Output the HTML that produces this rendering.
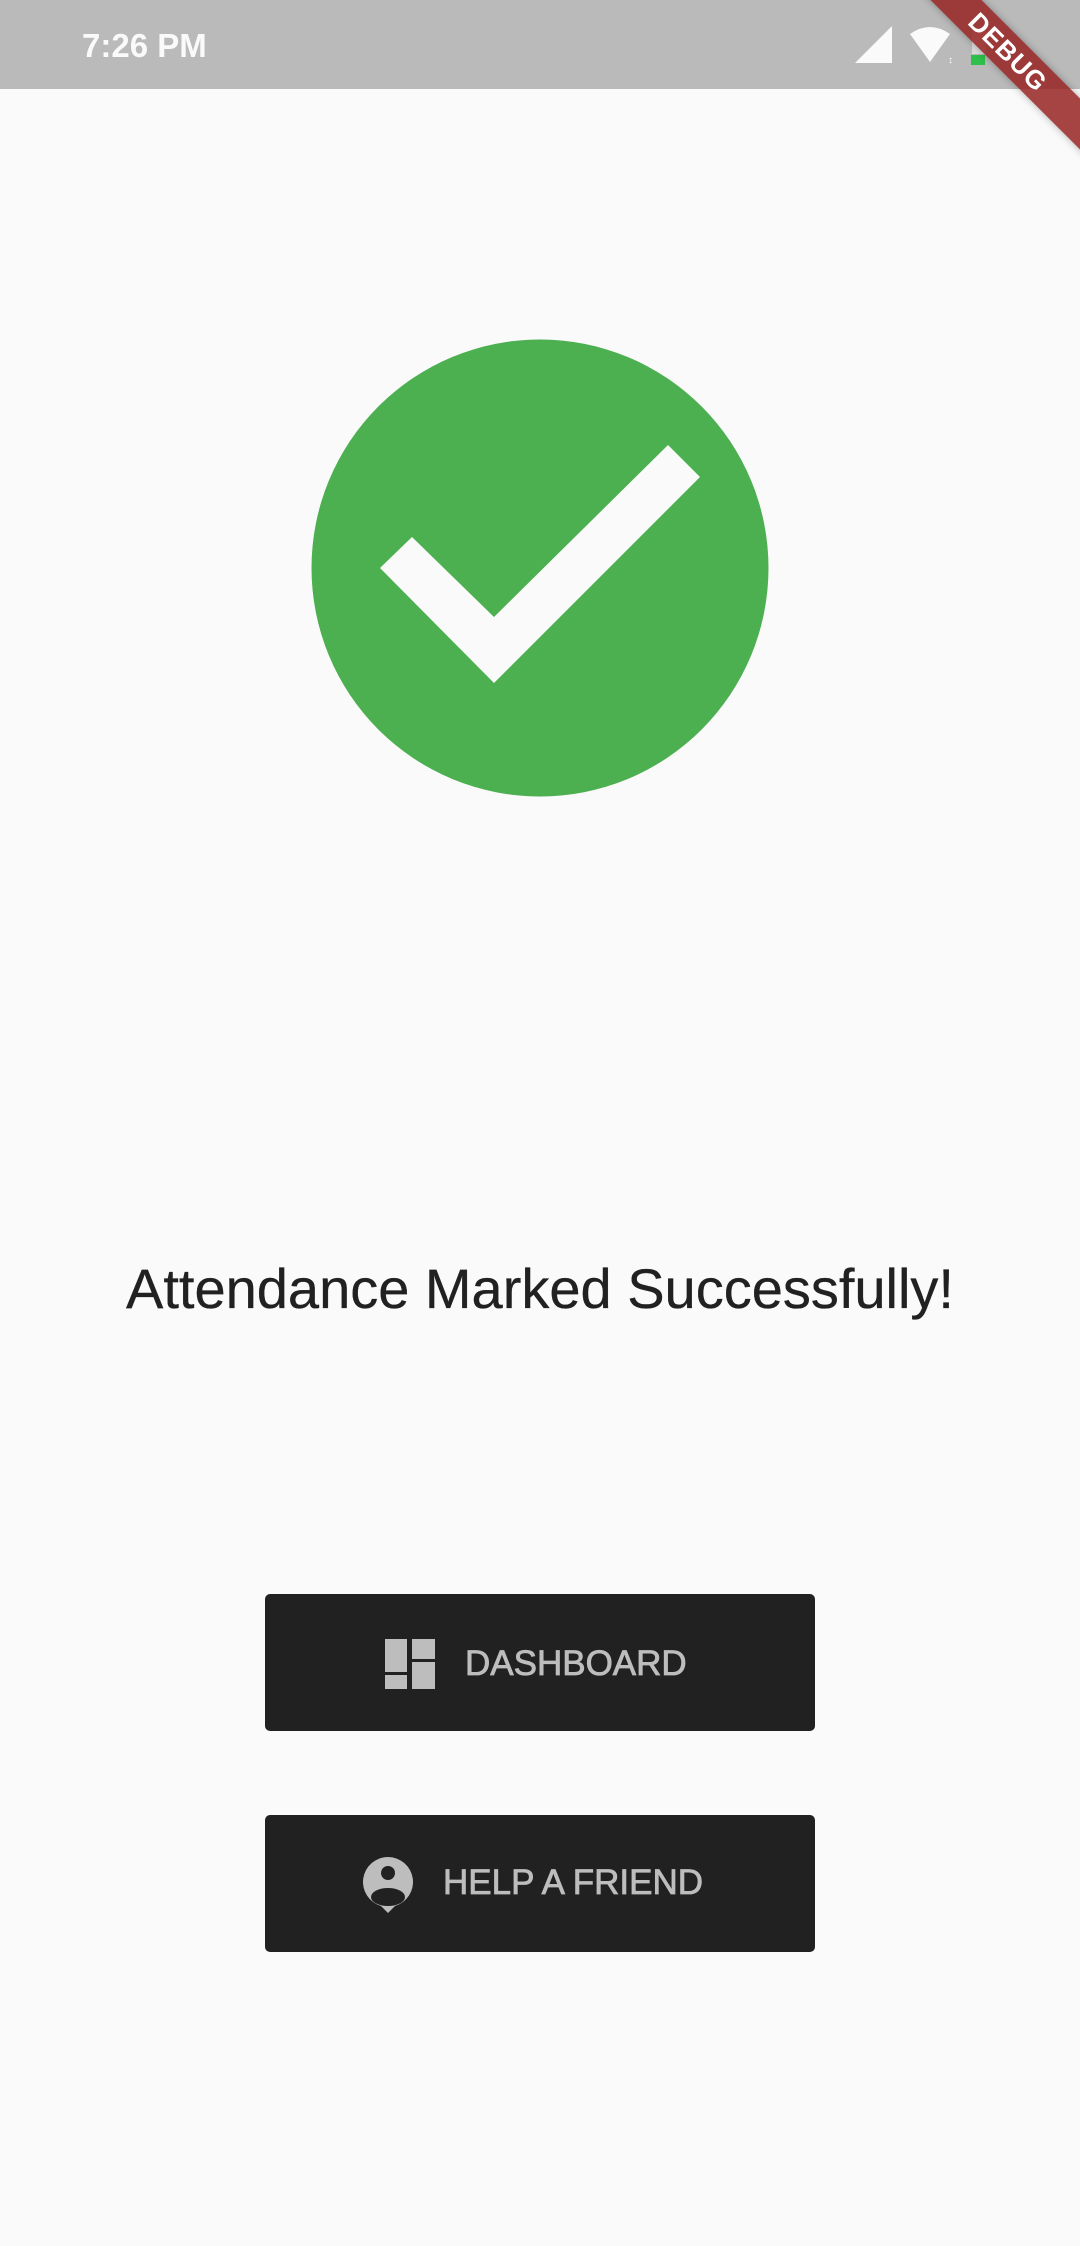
<!DOCTYPE html>
<html><head><meta charset="utf-8">
<style>
html,body{margin:0;padding:0;}
body{width:1080px;height:2246px;background:#fafafa;position:relative;overflow:hidden;font-family:"Liberation Sans",sans-serif;}
.status{position:absolute;left:0;top:0;width:1080px;height:89px;background:#bababa;}
.time{position:absolute;left:82px;top:27px;font-size:33px;font-weight:bold;color:#fafafa;}
.btn{position:absolute;left:265px;width:550px;height:137px;background:#212121;border-radius:5px;}
.lbl{position:absolute;color:#bdbdbd;font-size:35px;line-height:40px;-webkit-text-stroke:0.8px #bdbdbd;}
.title{position:absolute;left:0;width:1080px;top:1256px;text-align:center;font-size:56px;color:#212121;line-height:66px;-webkit-text-stroke:0.3px #212121;}
.banner{position:absolute;right:-78px;top:34px;width:300px;height:36px;background:rgba(150,35,35,0.85);transform:rotate(45deg);color:#fff;font-weight:bold;font-size:26px;text-align:center;line-height:36px;box-shadow:0 0 8px rgba(0,0,0,0.3);letter-spacing:1px;}
</style></head><body>
<div class="status">
  <div class="time">7:26 PM</div>
  <svg style="position:absolute;left:855px;top:26px" width="40" height="38"><polygon points="0,37 37,0 37,37" fill="#fafafa"/></svg>
  <svg style="position:absolute;left:908px;top:26px" width="50" height="40"><path d="M2,8 Q22,-6 42,8 L22,36 Z" fill="#fafafa"/><text x="40" y="37" font-size="10" fill="#fafafa">↕</text></svg>
  <div style="position:absolute;left:972px;top:28px;width:14px;height:26px;background:rgba(255,255,255,0.5)"></div>
  <div style="position:absolute;left:971px;top:55px;width:14px;height:10px;background:#2ec04a"></div>
</div>
<div class="banner">DEBUG</div>

<svg style="position:absolute;left:311px;top:339px" width="458" height="458" viewBox="311 339 458 458">
  <circle cx="540" cy="568" r="228.5" fill="#4caf50"/>
  <polygon points="380,568 412,537 494,617 668,445 700,477 494,683" fill="#fafafa"/>
</svg>

<div class="title">Attendance Marked Successfully!</div>

<div class="btn" style="top:1594px">
  <svg style="position:absolute;left:119px;top:45px" width="52" height="50" viewBox="0 0 50 50">
    <rect x="0" y="0" width="22" height="33" fill="#bdbdbd"/>
    <rect x="0" y="36" width="22" height="14" fill="#bdbdbd"/>
    <rect x="27" y="0" width="23" height="20" fill="#bdbdbd"/>
    <rect x="27" y="23" width="23" height="27" fill="#bdbdbd"/>
  </svg>
  <div class="lbl" style="left:200px;top:50px">DASHBOARD</div>
</div>

<div class="btn" style="top:1815px">
  <svg style="position:absolute;left:97px;top:42px" width="52" height="56" viewBox="0 0 52 56">
    <path d="M26,0 A25,25 0 0 0 19,49 L26,56 L33,49 A25,25 0 0 0 26,0 Z" fill="#bdbdbd"/>
    <circle cx="26" cy="16" r="7" fill="#212121"/>
    <ellipse cx="26" cy="40" rx="17" ry="9" fill="#212121"/>
  </svg>
  <div class="lbl" style="left:178px;top:48px">HELP A FRIEND</div>
</div>
</body></html>
